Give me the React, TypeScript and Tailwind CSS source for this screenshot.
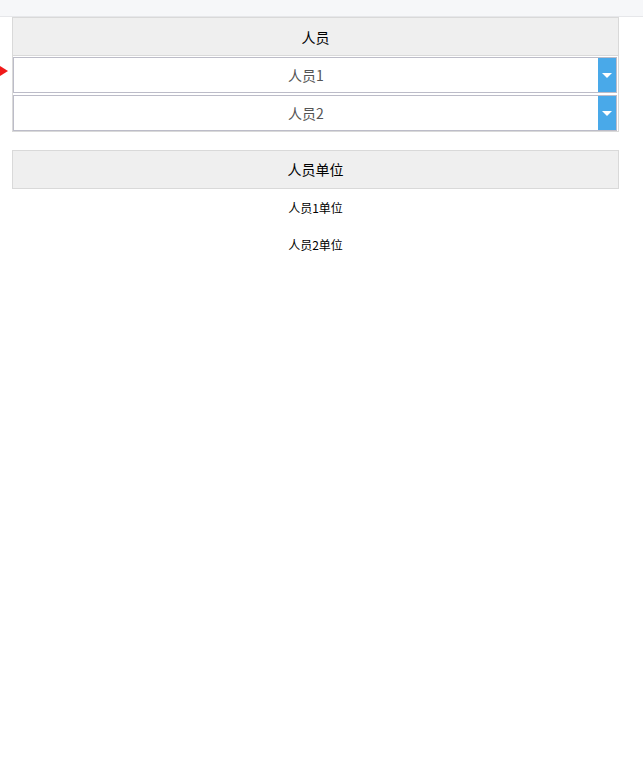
const font = { fontFamily: '"Noto Sans CJK SC", "Liberation Sans", sans-serif' }

function Select({ label }: { label: string }) {
  return (
    <div className="flex h-[36px] border border-[#bcbcc8] bg-white">
      <div className="flex flex-1 items-center justify-center text-[14px] text-[#555]">{label}</div>
      <div className="flex w-[18px] items-center justify-center bg-[#49a9e9]">
        <div className="h-0 w-0 border-x-[5px] border-t-[5px] border-x-transparent border-t-white" />
      </div>
    </div>
  )
}

export default function App() {
  return (
    <div className="relative min-h-[774px] bg-white" style={font}>
      <div className="h-[17px] border-b border-[#e6e7ea] bg-[#f6f7f9]" />
      <div className="ml-[12px] mr-[24px]">
        <div className="border-x border-b border-[#d9d9d9]">
          <div className="flex h-[39px] items-center justify-center border-y border-[#d9d9d9] bg-[#efefef] pt-[1px] text-[14px] text-black">
            人员
          </div>
          <div className="flex flex-col gap-[2px] pt-[1px] pr-[1px]">
            <Select label="人员1" />
            <Select label="人员2" />
          </div>
        </div>

        <div className="mt-[18px]">
          <div className="flex h-[39px] items-center justify-center border border-[#d9d9d9] bg-[#efefef] text-[14px] text-black">
            人员单位
          </div>
          <div className="flex h-[37px] items-center justify-center text-[12px] text-black">人员1单位</div>
          <div className="flex h-[37px] items-center justify-center text-[12px] text-black">人员2单位</div>
        </div>
      </div>
      <div className="absolute left-0 top-[66px] h-0 w-0 border-y-[5px] border-l-[8px] border-y-transparent border-l-[#f01a1a]" />
    </div>
  )
}
